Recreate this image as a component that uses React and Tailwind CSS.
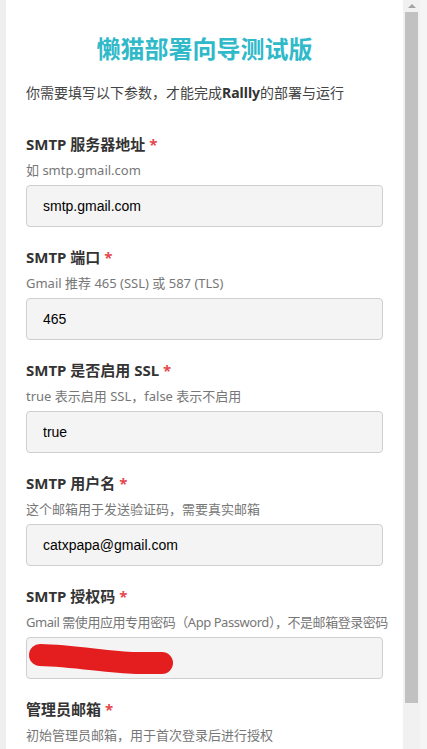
const fields = [
  { label: "SMTP 服务器地址", hint: "如 smtp.gmail.com", value: "smtp.gmail.com" },
  { label: "SMTP 端口", hint: "Gmail 推荐 465 (SSL) 或 587 (TLS)", value: "465" },
  { label: "SMTP 是否启用 SSL", hint: "true 表示启用 SSL，false 表示不启用", value: "true" },
  { label: "SMTP 用户名", hint: "这个邮箱用于发送验证码，需要真实邮箱", value: "catxpapa@gmail.com" },
  {
    label: "SMTP 授权码",
    hint: "Gmail 需使用应用专用密码（App Password），不是邮箱登录密码",
    value: "",
    redacted: true,
    tight: true,
  },
  { label: "管理员邮箱", hint: "初始管理员邮箱，用于首次登录后进行授权", value: "" },
];

function Field({ label, hint, value, redacted, tight }) {
  return (
    <div className="mb-[19px]">
      <label className="block text-[15px] leading-[22px] font-bold text-[#333]">
        {label} <span className="text-[#e5484d]">*</span>
      </label>
      <p
        className={`mt-[6px] text-[13px] leading-[18px] text-[#777] whitespace-nowrap ${
          tight ? "tracking-[-0.45px]" : ""
        }`}
      >
        {hint}
      </p>
      <div className="relative mt-[6px]">
        <input
          readOnly
          value={value}
          className="block w-full h-[42px] px-4 rounded-[4px] border border-[#cfcfcf] bg-[#f4f4f4] text-[14px] text-black font-['Liberation_Sans',Arial,sans-serif] outline-none"
        />
        {redacted && (
          <svg className="absolute left-0 top-0" width="200" height="42" viewBox="0 0 200 42">
            {/* scribble over the secret */}
            <path
              d="M14 18 C 50 19, 80 25, 110 26 L 136 26"
              fill="none"
              stroke="#e41e1e"
              strokeWidth="22"
              strokeLinecap="round"
            />
          </svg>
        )}
      </div>
    </div>
  );
}

export default function App() {
  return (
    <div className="flex h-[749px] w-[427px] overflow-hidden bg-[#f5f5f5] font-['Noto_Sans','Noto_Sans_CJK_SC',sans-serif]">
      <div className="w-[6px] shrink-0 bg-[#efefef]" />
      <main className="w-[397px] shrink-0 bg-white px-5 overflow-hidden">
        <h1 className="pt-8 text-center text-[24px] leading-[32px] font-bold text-[#2fb9c9] font-['Noto_Sans_CJK_SC',sans-serif]">
          懒猫部署向导测试版
        </h1>
        <p className="mt-[19px] text-[14px] leading-[20px] text-[#444]">
          你需要填写以下参数，才能完成<b className="font-bold text-[#333]">Rallly</b>的部署与运行
        </p>
        <div className="mt-[30px]">
          {fields.map((f) => (
            <Field key={f.label} {...f} />
          ))}
        </div>
      </main>
      {/* scrollbar */}
      <div className="w-[17px] shrink-0 bg-[#f1f1f1] flex flex-col items-center">
        <div className="h-[12px] flex items-center justify-center">
          <div className="w-0 h-0 border-l-[4px] border-r-[4px] border-b-[4px] border-l-transparent border-r-transparent border-b-[#a3a3a3]" />
        </div>
        <div className="w-[13px] h-[691px] bg-[#c1c1c1]" />
      </div>
      <div className="w-[7px] shrink-0 bg-[#f5f5f5]" />
    </div>
  );
}
